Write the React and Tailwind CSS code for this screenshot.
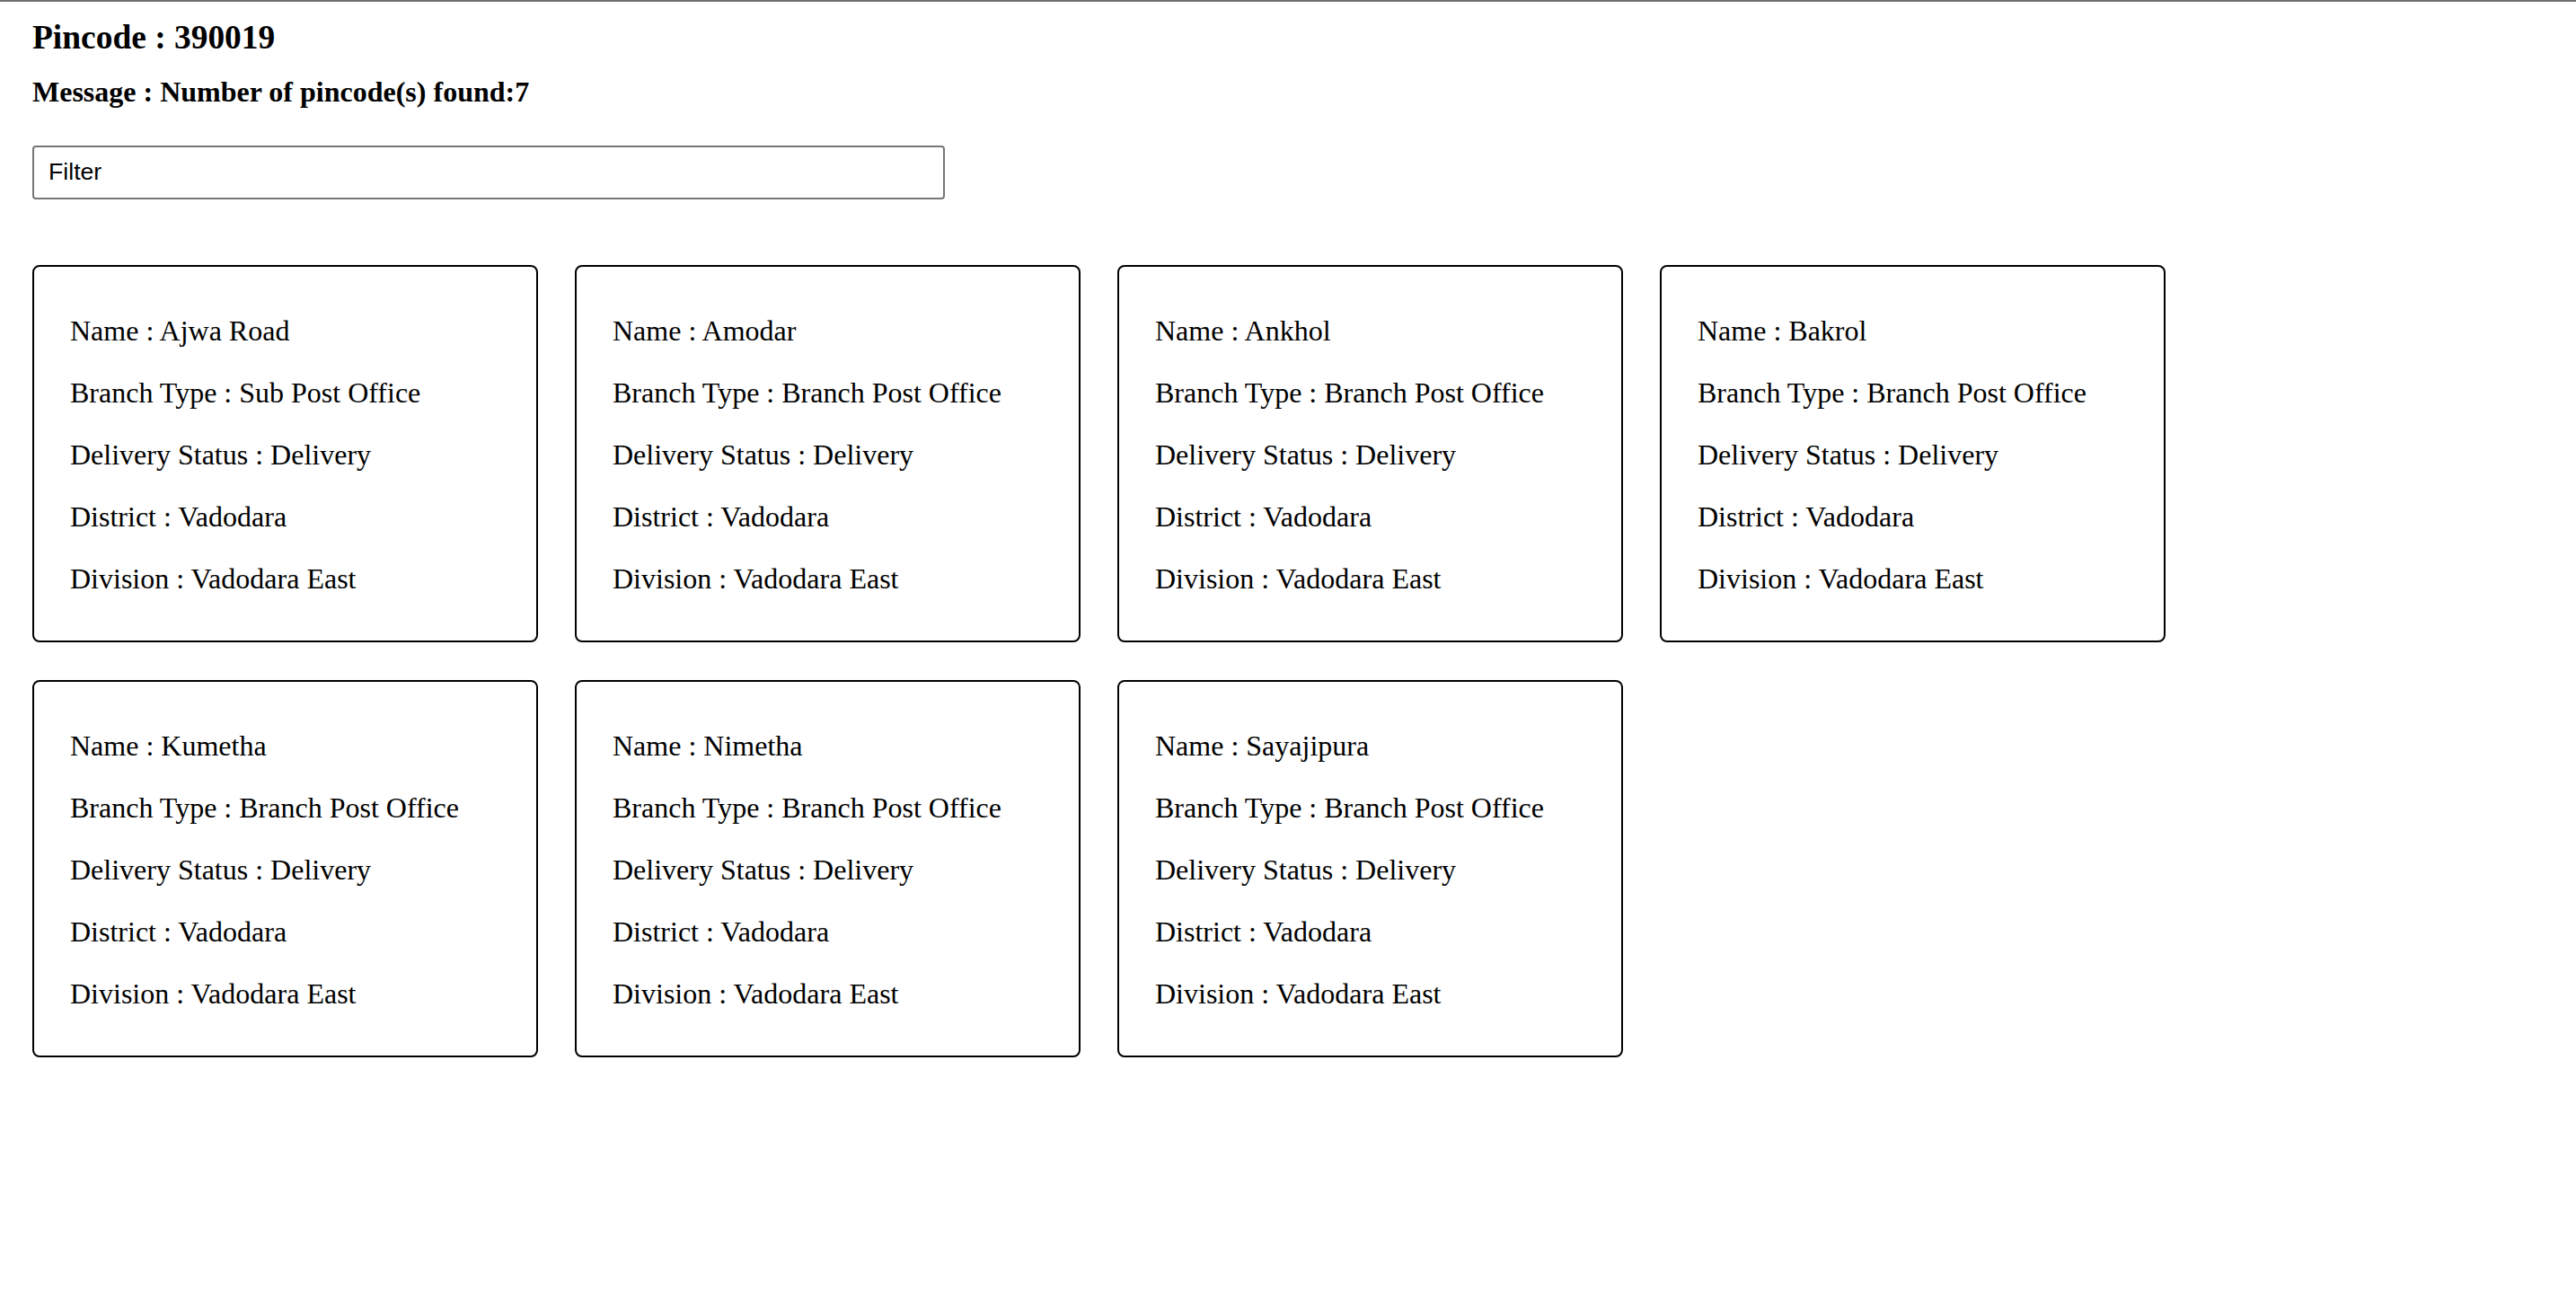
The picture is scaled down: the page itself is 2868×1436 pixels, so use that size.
import { useState } from "react";

const offices = [
  { name: "Ajwa Road", type: "Sub Post Office" },
  { name: "Amodar", type: "Branch Post Office" },
  { name: "Ankhol", type: "Branch Post Office" },
  { name: "Bakrol", type: "Branch Post Office" },
  { name: "Kumetha", type: "Branch Post Office" },
  { name: "Nimetha", type: "Branch Post Office" },
  { name: "Sayajipura", type: "Branch Post Office" },
];

function OfficeCard({ office }) {
  return (
    <div className="w-[563px] border-2 border-black rounded-[8px] px-[40px] pt-[21px] pb-[18px]">
      <p className="my-[32px] leading-[37px]">Name : {office.name}</p>
      <p className="my-[32px] leading-[37px]">Branch Type : {office.type}</p>
      <p className="my-[32px] leading-[37px]">Delivery Status : Delivery</p>
      <p className="my-[32px] leading-[37px]">District : Vadodara</p>
      <p className="my-[32px] leading-[37px]">Division : Vadodara East</p>
    </div>
  );
}

export default function App() {
  const [filter, setFilter] = useState("");

  const shown = offices.filter((o) =>
    o.name.toLowerCase().includes(filter.toLowerCase())
  );

  return (
    <div
      className="min-h-screen bg-white text-black border-t-2 border-[#717171]"
      style={{ fontFamily: '"Liberation Serif", "Times New Roman", serif' }}
    >
      <div className="px-[36px] pt-[18px]">
        {/* Header */}
        <h3 className="text-[37.44px] leading-[43px] font-bold">Pincode : 390019</h3>
        <h4 className="mt-[21px] text-[32px] leading-[36.8px] font-bold">
          Message : Number of pincode(s) found:7
        </h4>

        {/* Filter */}
        <input
          type="text"
          value={filter}
          onChange={(e) => setFilter(e.target.value)}
          placeholder="Filter"
          className="mt-[41px] block w-[1016px] h-[60px] px-[16px] border-2 border-[#767676] rounded-[4px] text-[26.67px] text-black placeholder:text-black outline-none font-['Liberation_Sans',Arial,sans-serif]"
        />

        {/* Cards */}
        <div className="mt-[73px] flex flex-wrap gap-x-[41px] gap-y-[42px] text-[32px]">
          {shown.map((o) => (
            <OfficeCard key={o.name} office={o} />
          ))}
        </div>
      </div>
    </div>
  );
}
